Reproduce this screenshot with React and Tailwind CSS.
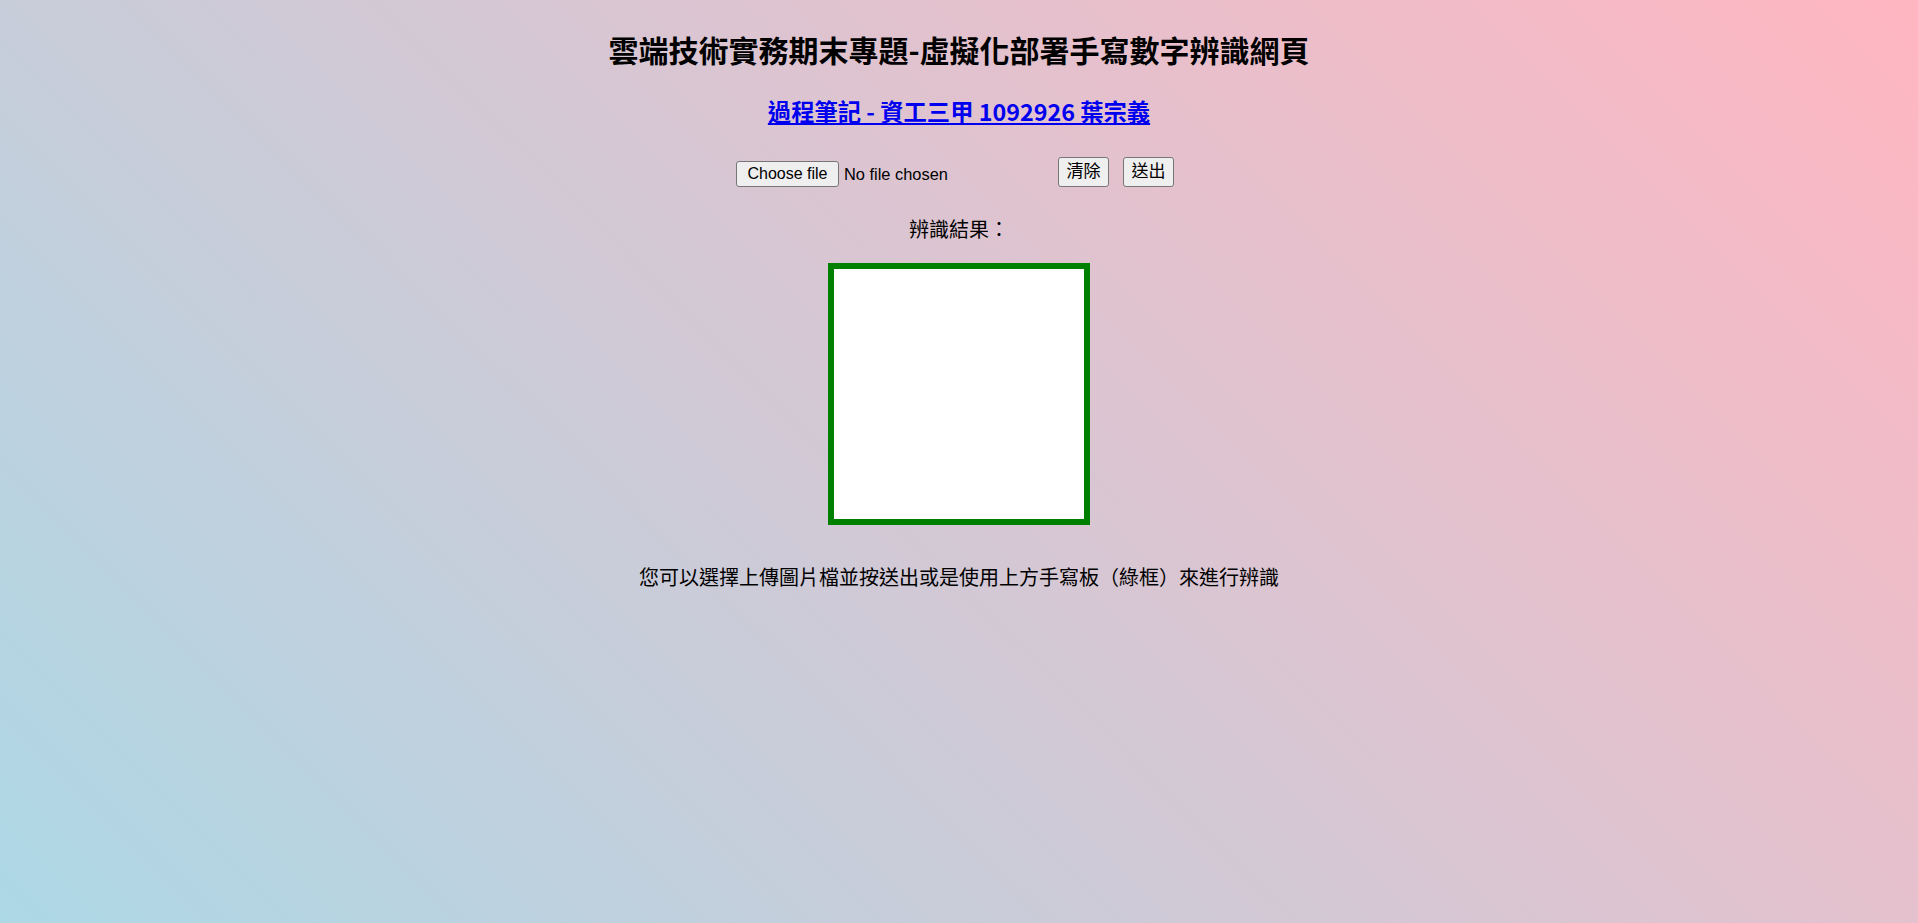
import React from 'react';

const cjk = "font-['Noto_Sans_CJK_TC','Noto_Sans',sans-serif]";
const btn =
  "bg-[#efefef] border border-[#767676] rounded-[3px] text-black font-['Liberation_Sans','Noto_Sans_CJK_TC',sans-serif] flex items-center justify-center";

const App = () => {
  return (
    <div className="min-h-screen bg-linear-45/srgb from-[#add8e6] to-[#ffb6c1] flex flex-col items-center text-black">
      <h1 className={`${cjk} pt-[29px] text-[30px] leading-[40px] font-bold`}>
        雲端技術實務期末專題-虛擬化部署手寫數字辨識網頁
      </h1>

      <h2 className={`${cjk} mt-[26px] text-[23.3px] leading-[32px] font-bold`}>
        <a href="#" className="text-[#0000ee] underline">
          過程筆記 - 資工三甲 1092926 葉宗義
        </a>
      </h2>

      <div className="mt-[30px] flex items-end pr-[8px]">
        <div className="w-[310px] flex items-center h-[26px]">
          <button className={`${btn} text-[16px] w-[103px] h-[26px]`}>Choose file</button>
          <span className="ml-[5px] text-[16.4px] font-['Liberation_Sans',sans-serif]">No file chosen</span>
        </div>
        <button className={`${btn} text-[17px] ml-[12px] w-[51px] h-[30px]`}>清除</button>
        <button className={`${btn} text-[17px] ml-[14px] w-[51px] h-[30px]`}>送出</button>
      </div>

      <p className={`${cjk} mt-[28px] text-[20px] leading-[28px]`}>辨識結果：</p>

      <div className="mt-[20px] w-[262px] h-[262px] border-[6px] border-[#008000] bg-white" />

      <p className={`${cjk} mt-[38px] text-[20px] leading-[28px]`}>
        您可以選擇上傳圖片檔並按送出或是使用上方手寫板（綠框）來進行辨識
      </p>
    </div>
  );
};

export default App;
